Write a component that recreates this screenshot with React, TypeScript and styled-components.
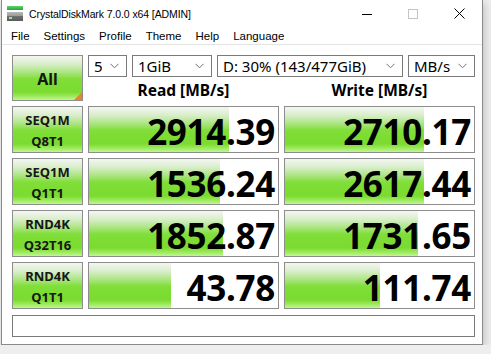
import React from "react";
import styled, { createGlobalStyle, css } from "styled-components";

const GlobalStyle = createGlobalStyle`
  html, body {
    margin: 0;
    padding: 0;
    background: #eeeeee;
    font-family: "Noto Sans", "Liberation Sans", sans-serif;
    overflow: hidden;
  }
`;

const uiFont = css`
  font-family: "Liberation Sans", "Noto Sans", sans-serif;
`;

const greenFill = css`
  background: linear-gradient(
    to bottom,
    #f3f6f1 0%,
    #d9eecb 18%,
    #a9e47c 38%,
    #80de38 52%,
    #7bdb2f 82%,
    #a6ee6a 94%,
    #c2f595 100%
  );
`;

const Window = styled.div`
  margin-left: 1px;
  width: 482px;
  height: 345px;
  box-sizing: border-box;
  background: #ffffff;
  border: 1px solid #8a8a8a;
  border-top: none;
  box-shadow: 2px 3px 8px rgba(0, 0, 0, 0.18);
  display: flex;
  flex-direction: column;
`;

const TitleBar = styled.div`
  height: 27px;
  display: flex;
  align-items: center;
  padding-left: 5px;
  color: #000;
  ${uiFont}
  font-size: 10.5px;
`;

const Title = styled.span`
  margin-left: 6px;
  flex: 1;
  letter-spacing: -0.1px;
`;

const Controls = styled.div`
  display: flex;
  height: 100%;
`;

const CtrlButton = styled.div`
  width: 46px;
  display: flex;
  align-items: center;
  justify-content: center;
`;

const MenuBar = styled.div`
  height: 17px;
  display: flex;
  align-items: center;
  padding-left: 2px;
  border-bottom: 1px solid #e4e4e4;
  ${uiFont}
  font-size: 11.5px;
`;

const MenuItem = styled.span`
  padding: 0 7px;
`;

const Client = styled.div`
  padding: 10px 7px 0 10px;
  display: flex;
  flex-direction: column;
`;

const Grid = styled.div`
  display: grid;
  grid-template-columns: 71px 191px 191px;
  grid-template-rows: 46px repeat(4, 47px);
  column-gap: 5px;
  row-gap: 5px;
`;

const GreenButton = styled.div`
  position: relative;
  box-sizing: border-box;
  border: 1px solid #8d8d8d;
  ${greenFill}
  display: flex;
  flex-direction: column;
  align-items: center;
  justify-content: center;
  color: #161616;
  font-weight: 700;
`;

const AllButton = styled(GreenButton)`
  font-size: 16px;
  padding-top: 2px;
`;

const Corner = styled.div`
  position: absolute;
  right: 0;
  bottom: 0;
  width: 0;
  height: 0;
  border-left: 8px solid transparent;
  border-bottom: 8px solid #f0822a;
`;

const LabelButton = styled(GreenButton)`
  font-size: 13px;
  padding-top: 2px;
`;

const LabelLine = styled.div`
  height: 21px;
  line-height: 21px;
`;

const TopArea = styled.div`
  grid-column: 2 / 4;
  display: flex;
  flex-direction: column;
`;

const Selects = styled.div`
  display: flex;
  gap: 5px;
  height: 25px;
`;

const Select = styled.div<{ $w?: number }>`
  box-sizing: border-box;
  ${({ $w }) => ($w ? `width: ${$w}px;` : "flex: 1;")}
  border: 1px solid #7a7a7a;
  background: #fff;
  display: flex;
  align-items: center;
  justify-content: space-between;
  padding: 0 7px 0 5px;
  font-size: 15px;
  color: #000;
`;

const Headers = styled.div`
  display: grid;
  grid-template-columns: 191px 191px;
  column-gap: 5px;
  flex: 1;
  align-items: center;
  padding-top: 2px;
`;

const Header = styled.div`
  text-align: center;
  font-weight: 700;
  font-size: 15.5px;
  color: #000;
`;

const ValueBox = styled.div`
  position: relative;
  box-sizing: border-box;
  border: 1px solid #8d8d8d;
  background: #fff;
  overflow: hidden;
`;

const Bar = styled.div`
  position: absolute;
  left: 0;
  top: 0;
  bottom: 0;
  ${greenFill}
`;

const Value = styled.div`
  position: relative;
  height: 100%;
  display: flex;
  align-items: center;
  justify-content: flex-end;
  padding: 4px 3px 0 0;
  box-sizing: border-box;
  font-weight: 700;
  font-size: 35px;
  letter-spacing: -0.3px;
  color: #000;
`;

const StatusBar = styled.div`
  margin-top: 6px;
  width: 463px;
  height: 22px;
  box-sizing: border-box;
  border: 1px solid #7a7a7a;
  background: #fff;
`;

const Chevron = () => (
  <svg width="9" height="6" viewBox="0 0 9 6">
    <polyline points="0.5,0.8 4.5,4.8 8.5,0.8" fill="none" stroke="#707070" strokeWidth="1" />
  </svg>
);

const AppIcon = () => (
  <svg width="16" height="15" viewBox="0 0 16 15">
    <defs>
      <linearGradient id="g" x1="0" y1="0" x2="0" y2="1">
        <stop offset="0" stopColor="#5fd36a" />
        <stop offset="1" stopColor="#25a63a" />
      </linearGradient>
      <linearGradient id="d" x1="0" y1="0" x2="0" y2="1">
        <stop offset="0" stopColor="#b8b8b8" />
        <stop offset="0.45" stopColor="#9a9a9a" />
        <stop offset="0.5" stopColor="#6e6e6e" />
        <stop offset="1" stopColor="#5a5a5a" />
      </linearGradient>
    </defs>
    <rect x="0" y="0" width="16" height="4" fill="url(#g)" />
    <rect x="0" y="6" width="16" height="9" fill="url(#d)" />
    <rect x="2" y="11" width="3" height="2" fill="#8ef08a" />
  </svg>
);

const rows = [
  { a: "SEQ1M", b: "Q8T1", read: "2914.39", rw: 74, write: "2710.17", ww: 73.5 },
  { a: "SEQ1M", b: "Q1T1", read: "1536.24", rw: 69.3, write: "2617.44", ww: 73.5 },
  { a: "RND4K", b: "Q32T16", read: "1852.87", rw: 70.9, write: "1731.65", ww: 70.4 },
  { a: "RND4K", b: "Q1T1", read: "43.78", rw: 43.4, write: "111.74", ww: 50.3 },
];

const menus = ["File", "Settings", "Profile", "Theme", "Help", "Language"];

const App = () => {
  return (
    <>
      <GlobalStyle />
      <Window>
        <TitleBar>
          <AppIcon />
          <Title>CrystalDiskMark 7.0.0 x64 [ADMIN]</Title>
          <Controls>
            <CtrlButton>
              <svg width="10" height="10" viewBox="0 0 10 10">
                <line x1="0" y1="5.5" x2="10" y2="5.5" stroke="#000" strokeWidth="1" />
              </svg>
            </CtrlButton>
            <CtrlButton>
              <svg width="10" height="10" viewBox="0 0 10 10">
                <rect x="0.5" y="0.5" width="9" height="9" fill="none" stroke="#c4c4c4" strokeWidth="1" />
              </svg>
            </CtrlButton>
            <CtrlButton>
              <svg width="11" height="11" viewBox="0 0 11 11">
                <path d="M0.5 0.5 L10.5 10.5 M10.5 0.5 L0.5 10.5" stroke="#000" strokeWidth="1" />
              </svg>
            </CtrlButton>
          </Controls>
        </TitleBar>
        <MenuBar>
          {menus.map((m) => (
            <MenuItem key={m}>{m}</MenuItem>
          ))}
        </MenuBar>
        <Client>
          <Grid>
            <AllButton>
              All
              <Corner />
            </AllButton>
            <TopArea>
              <Selects>
                <Select $w={39}>
                  5<Chevron />
                </Select>
                <Select $w={80}>
                  1GiB<Chevron />
                </Select>
                <Select>
                  D: 30% (143/477GiB)<Chevron />
                </Select>
                <Select $w={67}>
                  MB/s<Chevron />
                </Select>
              </Selects>
              <Headers>
                <Header>Read [MB/s]</Header>
                <Header>Write [MB/s]</Header>
              </Headers>
            </TopArea>
            {rows.map((r) => (
              <React.Fragment key={r.a + r.b}>
                <LabelButton>
                  <LabelLine>{r.a}</LabelLine>
                  <LabelLine>{r.b}</LabelLine>
                </LabelButton>
                <ValueBox>
                  <Bar style={{ width: `${r.rw}%` }} />
                  <Value>{r.read}</Value>
                </ValueBox>
                <ValueBox>
                  <Bar style={{ width: `${r.ww}%` }} />
                  <Value>{r.write}</Value>
                </ValueBox>
              </React.Fragment>
            ))}
          </Grid>
          <StatusBar />
        </Client>
      </Window>
    </>
  );
};

export default App;
